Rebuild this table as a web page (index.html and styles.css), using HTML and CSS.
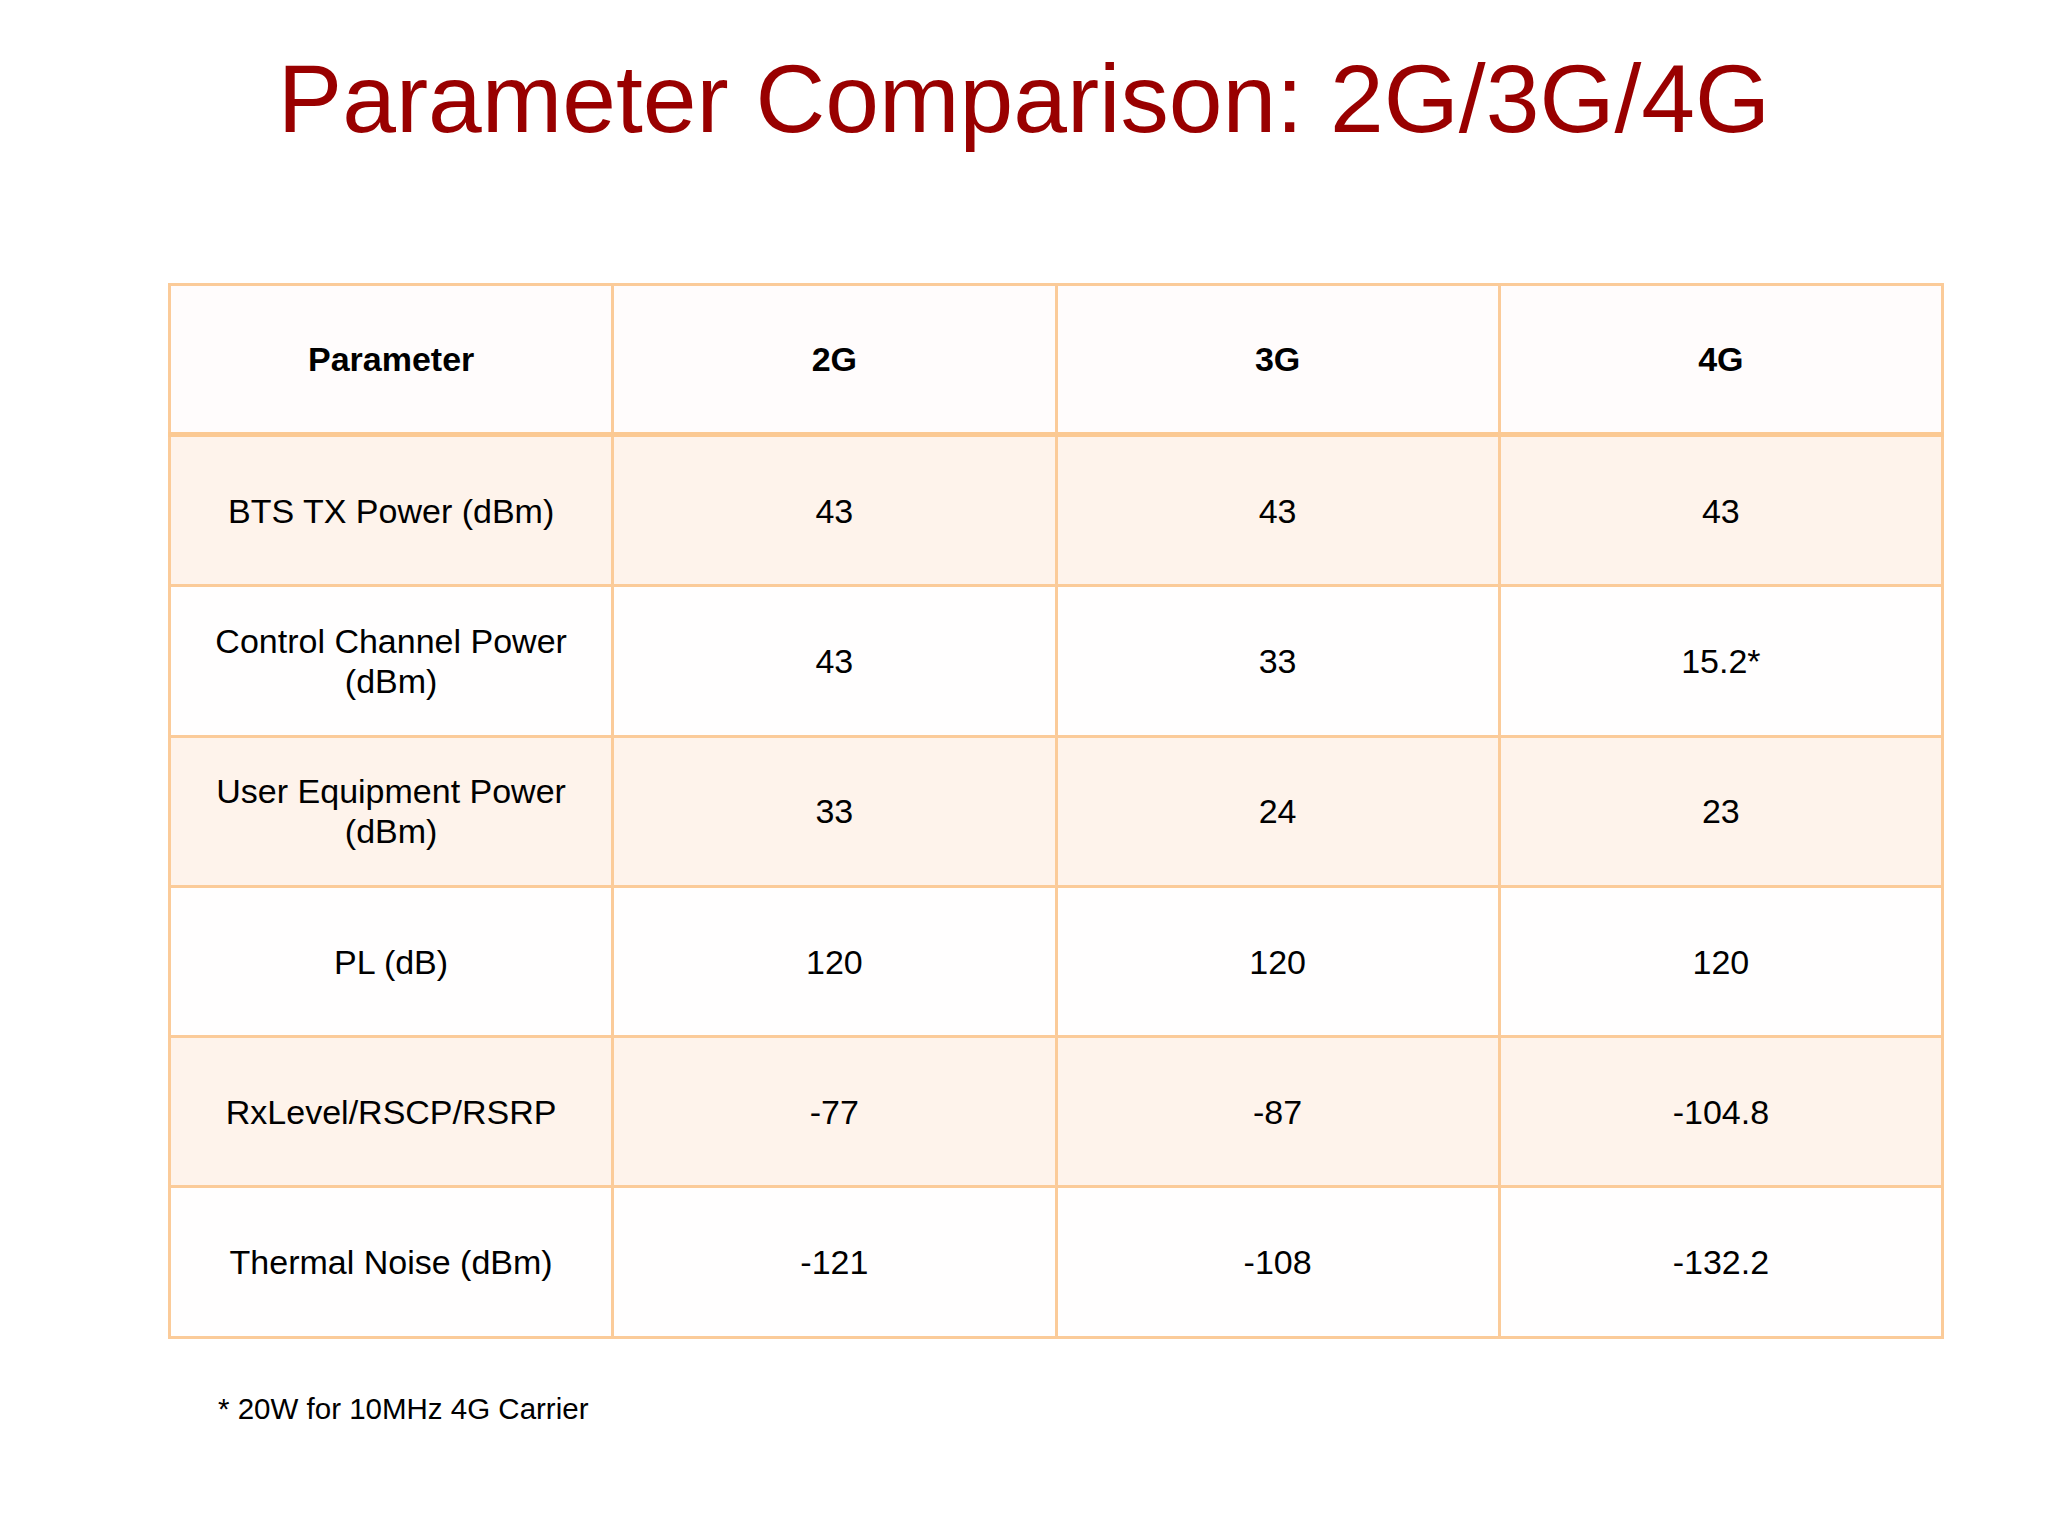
FILE: index.html
```html
<!DOCTYPE html>
<html lang="en">
<head>
<meta charset="utf-8">
<title>Parameter Comparison: 2G/3G/4G</title>
<link rel="stylesheet" href="styles.css">
</head>
<body>
<main class="slide">
  <h1 class="title">Parameter Comparison: 2G/3G/4G</h1>
  <table class="compare">
    <thead>
      <tr>
        <th>Parameter</th>
        <th>2G</th>
        <th>3G</th>
        <th>4G</th>
      </tr>
    </thead>
    <tbody>
      <tr class="shade">
        <td>BTS TX Power (dBm)</td>
        <td>43</td>
        <td>43</td>
        <td>43</td>
      </tr>
      <tr>
        <td>Control Channel Power<br>(dBm)</td>
        <td>43</td>
        <td>33</td>
        <td>15.2*</td>
      </tr>
      <tr class="shade">
        <td>User Equipment Power<br>(dBm)</td>
        <td>33</td>
        <td>24</td>
        <td>23</td>
      </tr>
      <tr>
        <td>PL (dB)</td>
        <td>120</td>
        <td>120</td>
        <td>120</td>
      </tr>
      <tr class="shade">
        <td>RxLevel/RSCP/RSRP</td>
        <td>-77</td>
        <td>-87</td>
        <td>-104.8</td>
      </tr>
      <tr>
        <td>Thermal Noise (dBm)</td>
        <td>-121</td>
        <td>-108</td>
        <td>-132.2</td>
      </tr>
    </tbody>
  </table>
  <p class="note">* 20W for 10MHz 4G Carrier</p>
</main>
</body>
</html>
```

FILE: styles.css
```css
html, body {
  margin: 0;
  padding: 0;
  background: #ffffff;
}

body {
  font-family: "Liberation Sans", Arial, sans-serif;
  color: #000000;
}

.slide {
  width: 2048px;
  height: 1536px;
  padding-top: 44px;
  box-sizing: border-box;
}

.title {
  margin: 0;
  font-size: 96.6px;
  line-height: 110px;
  font-weight: normal;
  color: #990000;
  text-align: center;
}

.compare {
  margin: 129px 0 0 168px;
  width: 1776px;
  border-collapse: collapse;
  table-layout: fixed;
  border: 3px solid #fbcb99;
}

.compare th,
.compare td {
  border: 3px solid #fbcb99;
  text-align: center;
  vertical-align: middle;
  font-size: 34px;
  line-height: 40px;
  padding: 0 10px;
}

.compare th {
  height: 146px;
  font-weight: bold;
  background: #fffcfc;
  border-bottom: 5px solid #fbc993;
}

.compare td {
  height: 147.3px;
  background: #fffefe;
}

.compare tr.shade td {
  background: #fef3eb;
}

.note {
  margin: 53px 0 0 218px;
  font-size: 29.5px;
  line-height: 33px;
}
```
